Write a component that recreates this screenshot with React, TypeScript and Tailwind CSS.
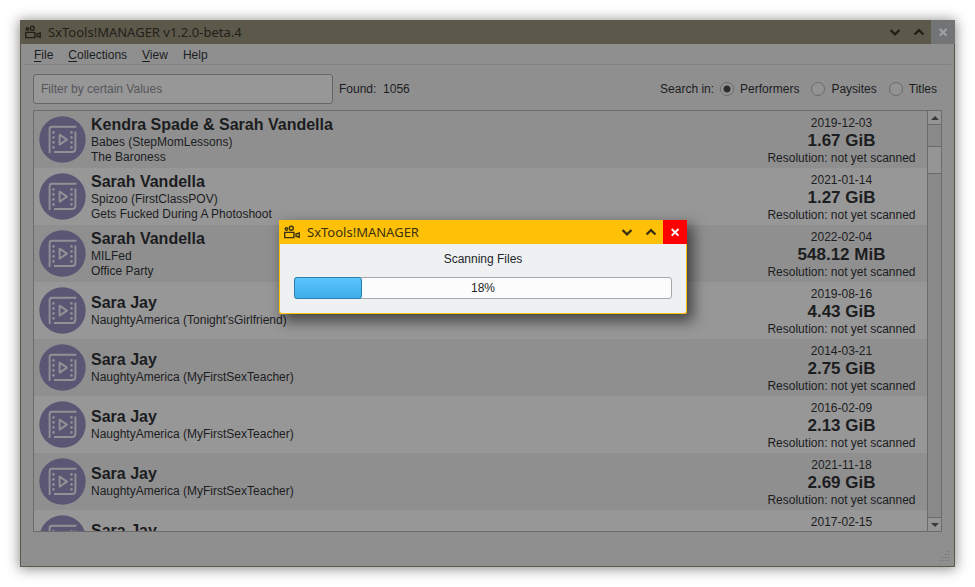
import React from "react";

type Video = {
  name: string;
  site: string;
  title?: string;
  date: string;
  size: string;
};

const videos: Video[] = [
  { name: "Kendra Spade & Sarah Vandella", site: "Babes (StepMomLessons)", title: "The Baroness", date: "2019-12-03", size: "1.67 GiB" },
  { name: "Sarah Vandella", site: "Spizoo (FirstClassPOV)", title: "Gets Fucked During A Photoshoot", date: "2021-01-14", size: "1.27 GiB" },
  { name: "Sarah Vandella", site: "MILFed", title: "Office Party", date: "2022-02-04", size: "548.12 MiB" },
  { name: "Sara Jay", site: "NaughtyAmerica (Tonight'sGirlfriend)", date: "2019-08-16", size: "4.43 GiB" },
  { name: "Sara Jay", site: "NaughtyAmerica (MyFirstSexTeacher)", date: "2014-03-21", size: "2.75 GiB" },
  { name: "Sara Jay", site: "NaughtyAmerica (MyFirstSexTeacher)", date: "2016-02-09", size: "2.13 GiB" },
  { name: "Sara Jay", site: "NaughtyAmerica (MyFirstSexTeacher)", date: "2021-11-18", size: "2.69 GiB" },
  { name: "Sara Jay", site: "", date: "2017-02-15", size: "" },
];

function CameraIcon() {
  return (
    <svg className="h-4 w-4 shrink-0" viewBox="0 0 16 16" fill="none" stroke="currentColor" strokeWidth="1.4" aria-hidden="true">
      <circle cx="2.4" cy="5" r="1.2" />
      <circle cx="7.3" cy="4.3" r="2" />
      <path d="M.7 8.4h9.2v5.2H.7z" />
      <path d="M15.2 9v4.2l-3.2-1V10z" />
    </svg>
  );
}

function Chevron({ up = false }: { up?: boolean }) {
  return (
    <svg className="h-6 w-6" viewBox="0 0 24 24" fill="none" stroke="currentColor" strokeWidth="2.4" aria-hidden="true">
      <path d={up ? "M7.5 14.5 12 10.2l4.5 4.3" : "M7.5 10 12 14.3l4.5-4.3"} />
    </svg>
  );
}

function TitleBar({ title, barClass, closeClass }: { title: string; barClass: string; closeClass: string }) {
  return (
    <header className={`flex h-6 shrink-0 items-center pl-[5px] ${barClass}`}>
      <CameraIcon />
      <span className="flex-1 pl-[7px] font-['Noto_Sans',sans-serif] text-[13px] leading-6">{title}</span>
      <button type="button" aria-label="Minimize"><Chevron /></button>
      <button type="button" aria-label="Maximize"><Chevron up /></button>
      <button type="button" aria-label="Close" className={closeClass}>
        <svg className="h-6 w-6" viewBox="0 0 24 24" fill="none" stroke="currentColor" strokeWidth="2" aria-hidden="true">
          <path d="m8.7 9 6.8 6.6M15.5 9l-6.8 6.6" />
        </svg>
      </button>
    </header>
  );
}

function VideoIcon() {
  return (
    <svg className="h-[47px] w-[47px] shrink-0" viewBox="0 0 47 47" fill="none" aria-hidden="true">
      <circle cx="23.5" cy="23.5" r="23.2" fill="#5b5674" />
      <g stroke="#929195" strokeWidth="1.9">
        <path d="M10.6 37V13.2q0-2.4 2.4-2.4h24.4" />
        <path d="M36.4 15.5v17.2q0 3.3-3.3 3.3H15" />
        <path d="m20.6 18.6 7.4 5-7.4 5z" strokeLinejoin="round" />
        <path d="M14.5 16.4v15.4M32.5 16.4v15.4" strokeWidth="2.6" strokeLinecap="round" strokeDasharray="0 5" />
      </g>
    </svg>
  );
}

function VideoRow({ video }: { video: Video }) {
  return (
    <li className="flex h-[57px] items-center pr-[10px] pl-[5px] odd:bg-[#8f8f8f] even:bg-[#979797]">
      <VideoIcon />
      <div className="min-w-0 flex-1 pl-[5px] leading-[15px]">
        <h2 className="text-[16px] leading-5 font-bold">{video.name}</h2>
        <p className="min-h-[15px]">{video.site}</p>
        {video.title && <p>{video.title}</p>}
      </div>
      <div className="w-[151px] pt-[2px] text-center leading-[15px]">
        <p>{video.date}</p>
        <p className="min-h-5 text-[17px] leading-5 font-bold">{video.size}</p>
        <p className="min-h-[15px]">{video.size && "Resolution: not yet scanned"}</p>
      </div>
    </li>
  );
}

function ScrollBar() {
  return (
    <div className="flex w-[14px] shrink-0 flex-col border-l border-[#6b6b6b] bg-[#898989]">
      <button type="button" aria-label="Scroll up" className="flex h-[14px] items-center justify-center border-b border-[#6b6b6b] bg-[#959595] text-[#3a3a3a]">
        <svg className="h-1 w-2" viewBox="0 0 8 4" fill="currentColor" aria-hidden="true"><path d="M0 4 4 0l4 4z" /></svg>
      </button>
      <div className="flex-1 pt-[21px]">
        <div className="h-7 border-y border-[#6b6b6b] bg-[#959595]" />
      </div>
      <button type="button" aria-label="Scroll down" className="flex h-[14px] items-center justify-center border-t border-[#6b6b6b] bg-[#959595] text-[#3a3a3a]">
        <svg className="h-1 w-2" viewBox="0 0 8 4" fill="currentColor" aria-hidden="true"><path d="M0 0h8L4 4z" /></svg>
      </button>
    </div>
  );
}

function ScanDialog() {
  const percent = 18;
  return (
    <section role="dialog" aria-label="SxTools!MANAGER" className="absolute top-[200px] left-[259px] w-[408px] rounded-b-[2px] bg-[#ffc107] text-[#232629] shadow-[5px_6px_14px_1px_rgba(0,0,0,0.55)]">
      <TitleBar title="SxTools!MANAGER" barClass="bg-[#ffc107] text-[#3b3213]" closeClass="bg-[#ff0000] text-white" />
      <div className="mx-px mb-px rounded-b-[2px] bg-[#eff0f1] px-[14px] pt-[7px] pb-[14px] text-center">
        <p className="leading-4">Scanning Files</p>
        <div role="progressbar" aria-label="Scanning Files" aria-valuenow={percent} aria-valuemin={0} aria-valuemax={100} className="relative mt-[10px] h-[22px] rounded-[3px] border border-[#a5a6a7] bg-[#fcfcfc]">
          <div className="absolute -top-px -bottom-px -left-px rounded-[3px] border border-[#2980b0] bg-linear-to-b from-[#5ac5ff] to-[#3daee9]" style={{ width: `${percent}%` }} />
          <span className="relative leading-5">{percent}%</span>
        </div>
      </div>
    </section>
  );
}

export default function App() {
  return (
    <div className="flex h-screen flex-col bg-white p-5 font-['Liberation_Sans',Arial,sans-serif] text-[12px] text-[#1c1d1f]">
      <main className="relative flex min-h-0 flex-1 flex-col bg-[#5c594b] shadow-[0_1px_12px_1px_rgba(0,0,0,0.45)]">
        <TitleBar title="SxTools!MANAGER v1.2.0-beta.4" barClass="text-[#222018]" closeClass="bg-[#737475] text-[#a3a3a3]" />
        <div className="mx-px mb-px flex min-h-0 flex-1 flex-col bg-[#8f8f8f]">
          <nav className="mx-[3px] flex h-[21px] shrink-0 items-end gap-[15px] border-b border-[#818181] pb-[1px] pl-[10px] leading-4">
            <button type="button"><u className="underline-offset-2">F</u>ile</button>
            <button type="button"><u className="underline-offset-2">C</u>ollections</button>
            <button type="button"><u className="underline-offset-2">V</u>iew</button>
            <button type="button">Help</button>
          </nav>

          <form className="mx-3 mt-[9px] flex h-[30px] shrink-0 items-center">
            <input type="text" aria-label="Filter" placeholder="Filter by certain Values" className="h-full w-[300px] rounded-[3px] border border-[#666666] bg-[#979797] px-[7px] placeholder:text-[#55565a]" />
            <span className="pl-[6px] whitespace-pre">Found:  1056</span>
            <fieldset className="ml-auto flex items-center pr-[5px]">
              <span className="pr-[6px]">Search in:</span>
              {["Performers", "Paysites", "Titles"].map((label, index) => (
                <label key={label} className="ml-3 flex items-center gap-[6px] first-of-type:ml-0">
                  <input type="radio" name="scope" defaultChecked={index === 0} className="h-[14px] w-[14px] appearance-none rounded-full border border-[#6b6b6b] bg-[#939393] checked:bg-[radial-gradient(circle,#2b2c2d_3px,#939393_4px)]" />
                  {label}
                </label>
              ))}
            </fieldset>
          </form>

          <div className="mx-3 mt-[6px] flex min-h-0 flex-1 border border-[#6b6b6b]">
            <ul className="min-w-0 flex-1 overflow-hidden">
              {videos.map((video, index) => <VideoRow key={index} video={video} />)}
            </ul>
            <ScrollBar />
          </div>

          <footer className="flex h-[34px] shrink-0 items-end justify-end pr-1 pb-1">
            <svg className="h-[11px] w-[11px] text-[#6a6a6a]" viewBox="0 0 11 11" fill="currentColor" aria-hidden="true">
              <path d="M9 0h1v1H9zM9 3h1v1H9zM6 3h1v1H6zM9 6h1v1H9zM6 6h1v1H6zM3 6h1v1H3zM9 9h1v1H9zM6 9h1v1H6zM3 9h1v1H3zM0 9h1v1H0z" />
            </svg>
          </footer>
        </div>
        <ScanDialog />
      </main>
    </div>
  );
}
